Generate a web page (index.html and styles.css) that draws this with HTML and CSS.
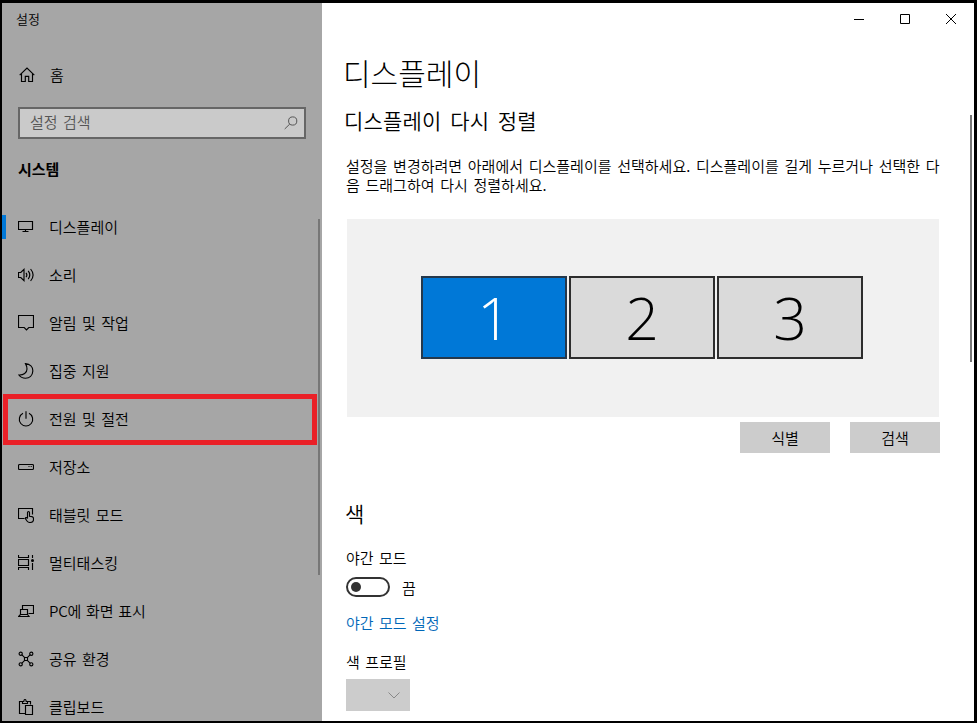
FILE: index.html
```html
<!DOCTYPE html>
<html lang="ko">
<head>
<meta charset="utf-8">
<title>설정</title>
<link rel="stylesheet" href="styles.css">
</head>
<body>
<div class="window">
  <aside class="sidebar">
    <div class="app-title">설정</div>
    <a class="home">
      <svg class="icon" viewBox="0 0 16 16"><path d="M.7 8.2 8 1l7.3 7.2M2.5 6.8v7.7h3.8V9.3h3.4v5.2h3.8V6.8"/></svg>
      <span>홈</span>
    </a>
    <div class="search">
      <span>설정 검색</span>
      <svg class="search-icon" viewBox="0 0 14 14"><circle cx="8.7" cy="5" r="4.1"/><path d="M5.8 8 .7 13"/></svg>
    </div>
    <h3 class="group">시스템</h3>
    <nav class="nav">
      <a class="item current"><svg class="icon" viewBox="0 0 16 16"><path d="M.5 2.500h14v8H.5zM7.500 10.500v2M4.500 12.500h6"/></svg><span>디스플레이</span></a>
      <a class="item"><svg class="icon" viewBox="0 0 16 16"><path d="M.5 5.500h2.300L6 2.300v11.400L2.800 10.500H.5zM8 5.800q1.700 2.200 0 4.400M10.200 3.900q3.200 4.100 0 8.200M12.600 2q5 6 0 12"/></svg><span>소리</span></a>
      <a class="item"><svg class="icon" viewBox="0 0 16 16"><path d="M.5.500h15v12h-4.700l-2.300 2.500-2.300-2.500H.5z"/></svg><span>알림 및 작업</span></a>
      <a class="item"><svg class="icon" viewBox="0 0 16 16"><path d="M7.500.6C12 1 15 4 14.800 8.100 14.600 12.500 11.500 15.200 7.500 15.200 4.700 15.200 2.400 14.100.9 12 5.500 12.200 9 10 9 6 9 4 8.500 2.400 7.500.6z"/></svg><span>집중 지원</span></a>
      <a class="item"><svg class="icon" viewBox="0 0 16 16"><path d="M8 .3v7.500M5 2.300a6.700 6.700 0 1 0 6 0"/></svg><span>전원 및 절전</span></a>
      <a class="item"><svg class="icon" viewBox="0 0 16 16"><path d="M1.500 5.500h13q1 0 1 1v3q0 1-1 1h-13q-1 0-1-1v-3q0-1 1-1zM10.500 7.500h1M12.700 7.500h1"/></svg><span>저장소</span></a>
      <a class="item"><svg class="icon" viewBox="0 0 16 16"><path d="M6.500 11.500h-6v-10h14v6M9.500 11.500V5.500q0-1 1-1t1 1v3.700l2.500.4q1.500.4 1.500 1.900v1q0 3-3.500 3-2 0-3-1.500L7.500 11.800q-.4-1.500 1-1.300l1 1"/></svg><span>태블릿 모드</span></a>
      <a class="item"><svg class="icon" viewBox="0 0 16 16"><path d="M.5 0v2.500h10V0M.5 15v-2.500h10V15M.5 4.500h10v6H.5zM14.500 0v3M14.500 8v7"/><circle class="solid" cx="14.500" cy="5.500" r="1.500"/></svg><span>멀티태스킹</span></a>
      <a class="item"><svg class="icon" viewBox="0 0 16 16"><path d="M4.500 6.500V2.500h11v8h-5M2.500 6.500h7v5h-7zM2.500 11.500 .5 13.500h10.500L9.500 11.500"/></svg><span class="tight">PC에 화면 표시</span></a>
      <a class="item"><svg class="icon" viewBox="0 0 16 16"><path d="m3.700 3.700 3 3M12.300 3.700l-3 3M3.700 12.300l3-3M12.300 12.300l-3-3M6.500 6.500h3v3h-3z"/><circle cx="2.700" cy="2.700" r="1.600"/><circle cx="13.300" cy="2.700" r="1.600"/><circle cx="2.700" cy="13.300" r="1.600"/><circle cx="13.300" cy="13.300" r="1.600"/></svg><span>공유 환경</span></a>
      <a class="item"><svg class="icon" viewBox="0 0 16 16"><path d="M7.500 14.500h-6v-12h3M9.500 2.500h3v3M4.500 4.500v-2h1.300q.2-2 1.200-2t1.200 2h1.300v2zM7.500 6.500h7v9h-7z"/></svg><span>클립보드</span></a>
    </nav>
    <div class="highlight"></div>
    <div class="scroll side-scroll"></div>
  </aside>
  <main class="main">
    <div class="caption">
      <svg viewBox="0 0 10 10"><path d="M0 5.500h10"/></svg>
      <svg viewBox="0 0 10 10"><path d="M.5.5h9v9h-9z"/></svg>
      <svg viewBox="0 0 10 10"><path d="m0 0 10 10M10 0 0 10"/></svg>
    </div>
    <h1>디스플레이</h1>
    <h2>디스플레이 다시 정렬</h2>
    <p class="description">설정을 변경하려면 아래에서 디스플레이를 선택하세요. 디스플레이를 길게 누르거나 선택한 다<br>음 드래그하여 다시 정렬하세요.</p>
    <div class="arrange">
      <div class="monitor selected">1</div>
      <div class="monitor">2</div>
      <div class="monitor">3</div>
    </div>
    <div class="actions"><button>식별</button><button>검색</button></div>
    <h2 class="color-title">색</h2>
    <div class="label">야간 모드</div>
    <div class="toggle-row"><div class="toggle"></div><span>끔</span></div>
    <a class="link">야간 모드 설정</a>
    <div class="label profile">색 프로필</div>
    <div class="select"><svg viewBox="0 0 12 7"><path d="m.5.5 5.500 5.500L11.500.5"/></svg></div>
    <div class="scroll main-scroll"></div>
  </main>
</div>
</body>
</html>
```
FILE: styles.css
```css
* { box-sizing: border-box; }
body {
  margin: 0;
  height: 723px;
  overflow: hidden;
  background: #000;
  color: #000;
  font: 350 15px/20px "Noto Sans CJK KR", sans-serif;
  word-spacing: 1.2px;
}
.window {
  display: flex;
  width: 977px;
  height: 723px;
  border: solid #000;
  border-width: 3px 3px 2px 2px;
  overflow: hidden;
}
svg { fill: none; stroke: currentColor; stroke-width: 1; flex: none; }
.solid { fill: currentColor; stroke: none; }
.sidebar {
  position: relative;
  width: 320px;
  flex: none;
  background: #a6a6a6;
  overflow: hidden;
}
.app-title { height: 34px; padding: 6px 0 0 14px; font-size: 13px; }
.home { display: flex; align-items: center; gap: 15px; height: 48px; margin-top: 14px; padding-left: 17px; }
.icon { width: 16px; height: 16px; stroke-width: 1.15; }
.search {
  display: flex;
  align-items: center;
  justify-content: space-between;
  width: 288px;
  height: 32px;
  margin: 8px 0 0 16px;
  padding: 0 6px 0 10px;
  border: 2px solid #666;
  background: #cacaca;
  color: #555;
}
.search span { padding-bottom: 2px; }
.search-icon { width: 14px; height: 14px; }
.group { height: 20px; margin: 20px 0 0 16px; font-size: 15px; font-weight: 600; }
.nav { margin-top: 24px; }
.item { display: flex; align-items: center; gap: 15px; height: 48px; padding-left: 16px; }
.current { padding-left: 0; gap: 0; }
.current::before { content: ""; width: 4px; height: 24px; margin-right: 12px; background: #0078d7; }
.current span { margin-left: 15px; }
.tight { letter-spacing: -.25px; }
.highlight {
  position: absolute;
  left: 1px;
  top: 391px;
  width: 314px;
  height: 51px;
  border: 5px solid #ea2027;
}
.scroll { position: absolute; width: 2px; background: #777; }
.side-scroll { right: 2px; top: 216px; height: 356px; }
.main { position: relative; flex: 1; background: #fff; padding-left: 24px; }
.caption { display: flex; justify-content: flex-end; gap: 36px; height: 49px; padding: 11px 18px 0 0; }
.caption svg { width: 10px; height: 10px; }
h1 { margin: 0 0 0 -3px; font-size: 30px; line-height: 40px; font-weight: 300; }
h2 { margin: 14px 0 0 -2px; font-size: 21px; line-height: 28px; font-weight: 350; letter-spacing: .2px; word-spacing: 2.5px; }
.description { margin: 22px 0 0; line-height: 19px; white-space: nowrap; word-spacing: 1.5px; }
.arrange {
  display: flex;
  align-items: center;
  justify-content: center;
  gap: 2px;
  width: 592px;
  height: 198px;
  margin: 25px 0 0 1px;
  padding: 0 2px 2px 0;
  background: #f1f1f1;
}
.monitor {
  width: 146px;
  height: 83px;
  border: 2px solid #2d2d2d;
  background: #dadada;
  text-align: center;
  font: 300 59px/78px "Open Sans", sans-serif;
}
.selected { background: #0078d7; border-color: #25384b; color: #fff; }
.actions { display: flex; justify-content: flex-end; gap: 20px; width: 594px; margin-top: 5px; }
button {
  width: 90px;
  height: 31px;
  padding: 0;
  border: 0;
  background: #ccc;
  color: #000;
  font: inherit;
}
.color-title { margin: 46px 0 0 -1px; }
.label { margin-top: 21px; }
.toggle-row { display: flex; align-items: center; gap: 12px; height: 20px; margin-top: 9px; }
.toggle-row span { padding-top: 2px; }
.toggle { width: 44px; height: 20px; padding: 3px; border: 2px solid #333; border-radius: 10px; }
.toggle::before { content: ""; display: block; width: 10px; height: 10px; border-radius: 50%; background: #333; }
.link { display: block; margin-top: 16px; color: #0067b8; }
.profile { margin-top: 19px; }
.select { display: flex; align-items: center; justify-content: flex-end; width: 64px; height: 32px; margin-top: 7px; padding-right: 10px; background: #ccc; color: #888; }
.select svg { width: 12px; height: 7px; }
.main-scroll { right: 2px; top: 112px; height: 247px; }
```
